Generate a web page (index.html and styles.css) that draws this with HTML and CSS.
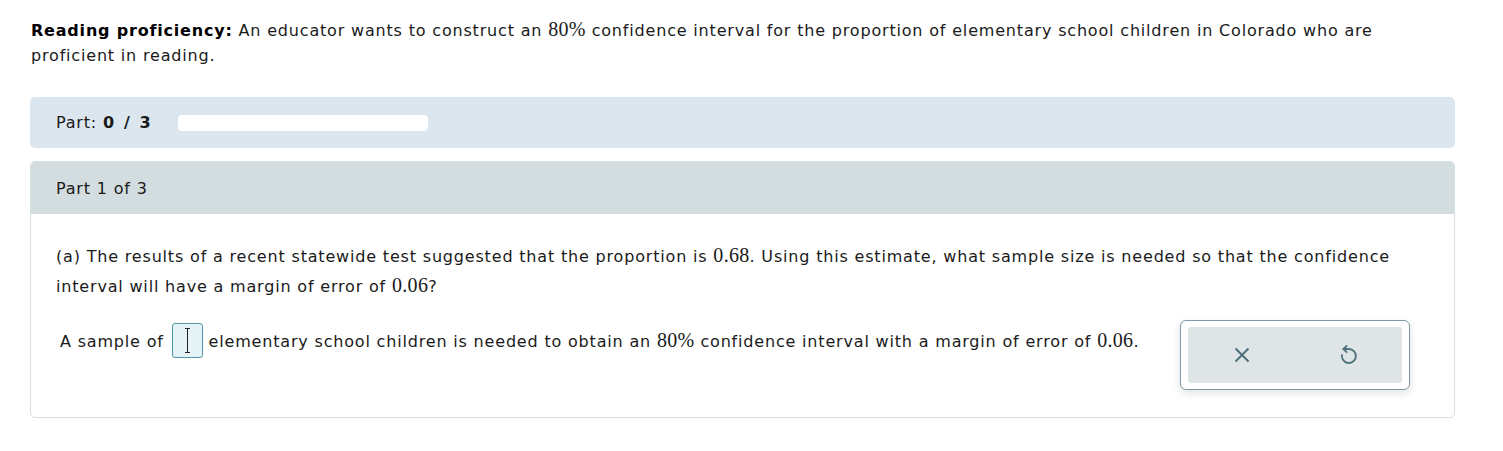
FILE: index.html
```html
<!DOCTYPE html>
<html>
<head>
<meta charset="utf-8">
<link rel="stylesheet" href="styles.css">
</head>
<body>
<div class="page">
  <p class="intro"><b>Reading proficiency:</b> An educator wants to construct an <span class="m">80%</span> confidence interval for the proportion of elementary school children in Colorado who are proficient in reading.</p>

  <div class="partbar">
    <span class="partlabel">Part: <b>0 / 3</b></span>
    <span class="progress"></span>
  </div>

  <div class="card">
    <div class="cardhead">Part 1 of 3</div>
    <div class="cardbody">
      <p class="question">(a) The results of a recent statewide test suggested that the proportion is <span class="m">0.68</span>. Using this estimate, what sample size is needed so that the confidence interval will have a margin of error of <span class="m">0.06</span>?</p>
      <div class="answerrow">
        <p class="answer">A sample of <span class="inputbox"><span class="cursor"></span></span> elementary school children is needed to obtain an <span class="m">80%</span> confidence interval with a margin of error of <span class="m">0.06</span>.</p>
        <div class="tools">
          <div class="toolsinner">
            <button class="tbtn" aria-label="clear">
              <svg width="16" height="16" viewBox="0 0 16 16"><path d="M1.5 1.5L14.5 14.5M14.5 1.5L1.5 14.5" stroke="#4d7079" stroke-width="2" fill="none"/></svg>
            </button>
            <button class="tbtn" aria-label="undo">
              <svg width="20" height="22" viewBox="0 0 20 22"><path d="M4.5 5H10A7 7 0 1 1 3.1 10.2" stroke="#4d7079" stroke-width="1.8" fill="none"/><path d="M8.2 1.4L4.3 5L8.2 8.6" stroke="#4d7079" stroke-width="1.8" fill="none"/></svg>
            </button>
          </div>
        </div>
      </div>
    </div>
  </div>
</div>
</body>
</html>
```

FILE: styles.css
```css
* { box-sizing: border-box; }
html, body { margin: 0; padding: 0; background: #fff; }
body {
  font-family: Verdana, "DejaVu Sans", sans-serif;
  font-size: 16px;
  letter-spacing: 0.82px;
  color: #1a1a1a;
}
.page {
  padding: 17px 48px 0 30px;
}
.intro {
  margin: 0 0 0 1px;
  line-height: 25px;
  padding-right: 60px;
}
.intro b { color: #000; letter-spacing: 0.8px; }
.m {
  font-family: "Liberation Serif", "Times New Roman", serif;
  font-size: 20px;
  letter-spacing: 0.3px;
}
.partbar {
  margin-top: 29px;
  height: 51px;
  background: #dbe6ef;
  border-radius: 5px;
  display: flex;
  align-items: center;
  padding-left: 26px;
}
.partlabel { width: 122px; }
.partlabel b { letter-spacing: 1.6px; word-spacing: 1px; }
.progress {
  width: 250px;
  height: 16px;
  background: #fff;
  border-radius: 4px;
}
.card {
  margin-top: 13px;
  border: 1px solid #d6e0e3;
  border-radius: 5px;
  overflow: hidden;
  height: 257px;
}
.cardhead {
  background: #d3dcdf;
  height: 52px;
  display: flex;
  align-items: center;
  padding-left: 25px;
}
.cardbody {
  padding: 27px 40px 0 25px;
}
.question {
  margin: 0;
  line-height: 29px;
}
.answerrow {
  display: flex;
  align-items: flex-start;
  margin-top: 19px;
}
.answer {
  margin: 3px 0 0 4px;
  flex: 1;
  line-height: 20px;
}
.inputbox {
  display: inline-block;
  width: 31px;
  height: 35px;
  margin-left: 2px;
  vertical-align: -11px;
  border: 1px solid #4f97a8;
  background: #e6f3f6;
  border-radius: 3px;
  position: relative;
}
.cursor {
  position: absolute;
  left: 14px;
  top: 4px;
  width: 1px;
  height: 25px;
  background: #222;
}
.cursor::before, .cursor::after {
  content: "";
  position: absolute;
  left: -2px;
  width: 5px;
  height: 1px;
  background: #222;
}
.cursor::before { top: 0; }
.cursor::after { bottom: 0; }
.tools {
  width: 230px;
  height: 70px;
  margin-right: 4px;
  background: #fff;
  border: 1px solid #7e9aa2;
  border-radius: 6px;
  padding: 6px 7px;
  box-shadow: 0 3px 8px rgba(0,0,0,0.12);
}
.toolsinner {
  height: 100%;
  background: #dfe5e7;
  border-radius: 3px;
  display: flex;
  justify-content: space-around;
  align-items: center;
}
.tbtn {
  border: 0;
  background: transparent;
  padding: 0;
  width: 40px;
  height: 40px;
  display: flex;
  align-items: center;
  justify-content: center;
}
```
